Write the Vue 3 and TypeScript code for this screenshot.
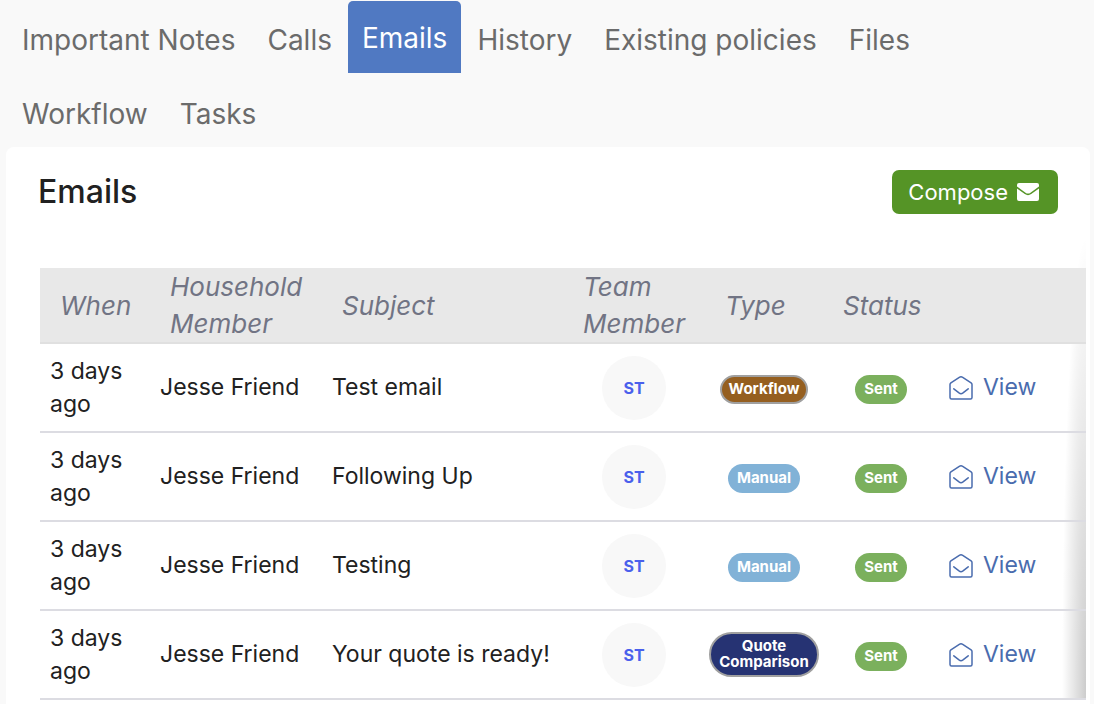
<script setup lang="ts">
import { ref } from 'vue'

interface EmailRow {
  when: string
  member: string
  subject: string
  initials: string
  type: string
  kind: 'workflow' | 'manual' | 'quote'
  status: string
}

const tabs: string[] = [
  'Important Notes', 'Calls', 'Emails', 'History',
  'Existing policies', 'Files', 'Workflow', 'Tasks',
]
const active = ref('Emails')

const rows: EmailRow[] = [
  { when: '3 days ago', member: 'Jesse Friend', subject: 'Test email', initials: 'ST', type: 'Workflow', kind: 'workflow', status: 'Sent' },
  { when: '3 days ago', member: 'Jesse Friend', subject: 'Following Up', initials: 'ST', type: 'Manual', kind: 'manual', status: 'Sent' },
  { when: '3 days ago', member: 'Jesse Friend', subject: 'Testing', initials: 'ST', type: 'Manual', kind: 'manual', status: 'Sent' },
  { when: '3 days ago', member: 'Jesse Friend', subject: 'Your quote is ready!', initials: 'ST', type: 'Quote Comparison', kind: 'quote', status: 'Sent' },
]
</script>

<template>
  <div class="page">
    <nav class="tabs">
      <button
        v-for="tab in tabs"
        :key="tab"
        type="button"
        class="tab"
        :class="{ active: tab === active }"
        @click="active = tab"
      >{{ tab }}</button>
    </nav>

    <section class="panel">
      <header class="panel-head">
        <h2>Emails</h2>
        <button type="button" class="compose">
          Compose
          <svg viewBox="0 0 22 18" width="22" height="18" aria-hidden="true">
            <path d="M2 0h18a2 2 0 0 1 2 2v1.500L13.500 9.700c-1.700 1.200-3.300 1.200-5 0L0 3.500V2a2 2 0 0 1 2-2z" fill="#fff" />
            <path d="M0 5.400l7.800 5.600c2.200 1.500 4.200 1.500 6.400 0L22 5.400v10.600a2 2 0 0 1-2 2H2a2 2 0 0 1-2-2z" fill="#fff" />
          </svg>
        </button>
      </header>

      <div class="scroller">
        <table>
          <colgroup>
            <col class="c-when" />
            <col class="c-member" />
            <col class="c-subject" />
            <col class="c-team" />
            <col class="c-type" />
            <col class="c-status" />
            <col />
          </colgroup>
          <thead>
            <tr>
              <th>When</th>
              <th>Household Member</th>
              <th>Subject</th>
              <th>Team Member</th>
              <th>Type</th>
              <th>Status</th>
              <th></th>
            </tr>
          </thead>
          <tbody>
            <tr v-for="(row, i) in rows" :key="i">
              <td>{{ row.when }}</td>
              <td>{{ row.member }}</td>
              <td>{{ row.subject }}</td>
              <td class="mid"><span class="avatar">{{ row.initials }}</span></td>
              <td class="mid tight"><span class="badge" :class="row.kind">{{ row.type }}</span></td>
              <td class="mid"><span class="badge sent">{{ row.status }}</span></td>
              <td>
                <a href="#" class="view">
                  <svg viewBox="0 0 24 24" width="24" height="24" fill="none" stroke="#4a6cae" stroke-width="1.500" stroke-linecap="round" stroke-linejoin="round" aria-hidden="true">
                    <path d="M1 8.500Q1 7.500 1.900 6.800L10.300 1.300Q12 .3 13.700 1.300L22.100 6.800Q23 7.500 23 8.500V21.500Q23 23 21.500 23H2.500Q1 23 1 21.500Z" />
                    <path d="M4.800 12.800L10 16.900Q12 18.400 14 16.900L19.200 12.800" />
                  </svg>
                  View
                </a>
              </td>
            </tr>
          </tbody>
        </table>
      </div>
    </section>
  </div>
</template>

<style>
body {
  margin: 0;
  background: #f9f9f9;
}
</style>

<style scoped>
.page {
  height: 100vh;
  overflow: hidden;
  display: flex;
  flex-direction: column;
  font-family: Inter, "Liberation Sans", sans-serif;
  font-size: 23px;
  line-height: 33px;
  color: #212121;
  background: #f9f9f9;
}
.tabs {
  display: flex;
  flex-wrap: wrap;
  align-items: flex-start;
  gap: 2px 4px;
  padding: 1px 32px 0 8px;
}
.tab {
  height: 72px;
  padding: 5px 14px 0;
  border: 0;
  border-radius: 5px 5px 0 0;
  background: transparent;
  color: #6b6b6b;
  font: inherit;
  font-size: 28px;
  line-height: 36px;
  white-space: nowrap;
}
.tab.active {
  margin: 0 -2px;
  padding-top: 1px;
  background: #5079c2;
  color: #fff;
}
.panel {
  flex: 1 0 auto;
  margin: 0 4px 0 6px;
  border-radius: 8px 8px 0 0;
  background: #fff;
}
.panel-head {
  display: flex;
  justify-content: space-between;
  align-items: center;
  padding: 23px 32px 22px;
}
h2 {
  margin: 0;
  font-size: 32px;
  line-height: 44px;
  font-weight: 500;
}
.compose {
  display: flex;
  align-items: center;
  gap: 9px;
  height: 44px;
  padding: 0 19px 0 16px;
  border: 0;
  border-radius: 7px;
  background: #559426;
  color: #fff;
  font: inherit;
  font-size: 22px;
}
.scroller {
  margin: 0 4px 0 34px;
  padding-top: 32px;
  background: radial-gradient(farthest-side at 100% 50%, rgba(0, 0, 0, 0.2), transparent) right top / 24px 900px no-repeat;
}
table {
  width: 100%;
  table-layout: fixed;
  border-collapse: separate;
  border-spacing: 0;
}
.c-when { width: 110px; }
.c-member { width: 172px; }
.c-subject { width: 241px; }
.c-team { width: 142px; }
.c-type { width: 118px; }
.c-status { width: 116px; }
th {
  height: 74px;
  padding: 0 0 0 20px;
  border-bottom: 2px solid #e0e0e0;
  background: #e8e8e8;
  color: #717484;
  font-size: 26px;
  font-style: italic;
  font-weight: 400;
  line-height: 37px;
  text-align: left;
}
td {
  height: 87px;
  padding: 0 10px;
  border-bottom: 2px solid #dcdce2;
  vertical-align: middle;
}
.mid {
  text-align: center;
  line-height: 0;
}
.tight {
  padding: 0 4px;
}
.avatar {
  display: inline-flex;
  align-items: center;
  justify-content: center;
  width: 64px;
  height: 64px;
  border-radius: 50%;
  background: #f8f8f8;
  color: #4a60ec;
  font-size: 16px;
  font-weight: 700;
  vertical-align: middle;
}
.badge {
  display: inline-block;
  box-sizing: border-box;
  margin-top: 4px;
  padding: 6px 9px 7px;
  border-radius: 23px;
  color: #fff;
  font-size: 15px;
  font-weight: 700;
  line-height: 16px;
}
.workflow,
.quote {
  padding: 4px 7px 5px;
  border: 2px solid #a0a0a0;
}
.workflow { background: #955f20; }
.manual { background: #81b2d7; }
.quote {
  margin-top: 0;
  background: #263373;
}
.sent { background: #7bb05d; }
.view {
  display: flex;
  align-items: center;
  gap: 10px;
  color: #4a6cae;
  text-decoration: none;
}
</style>
